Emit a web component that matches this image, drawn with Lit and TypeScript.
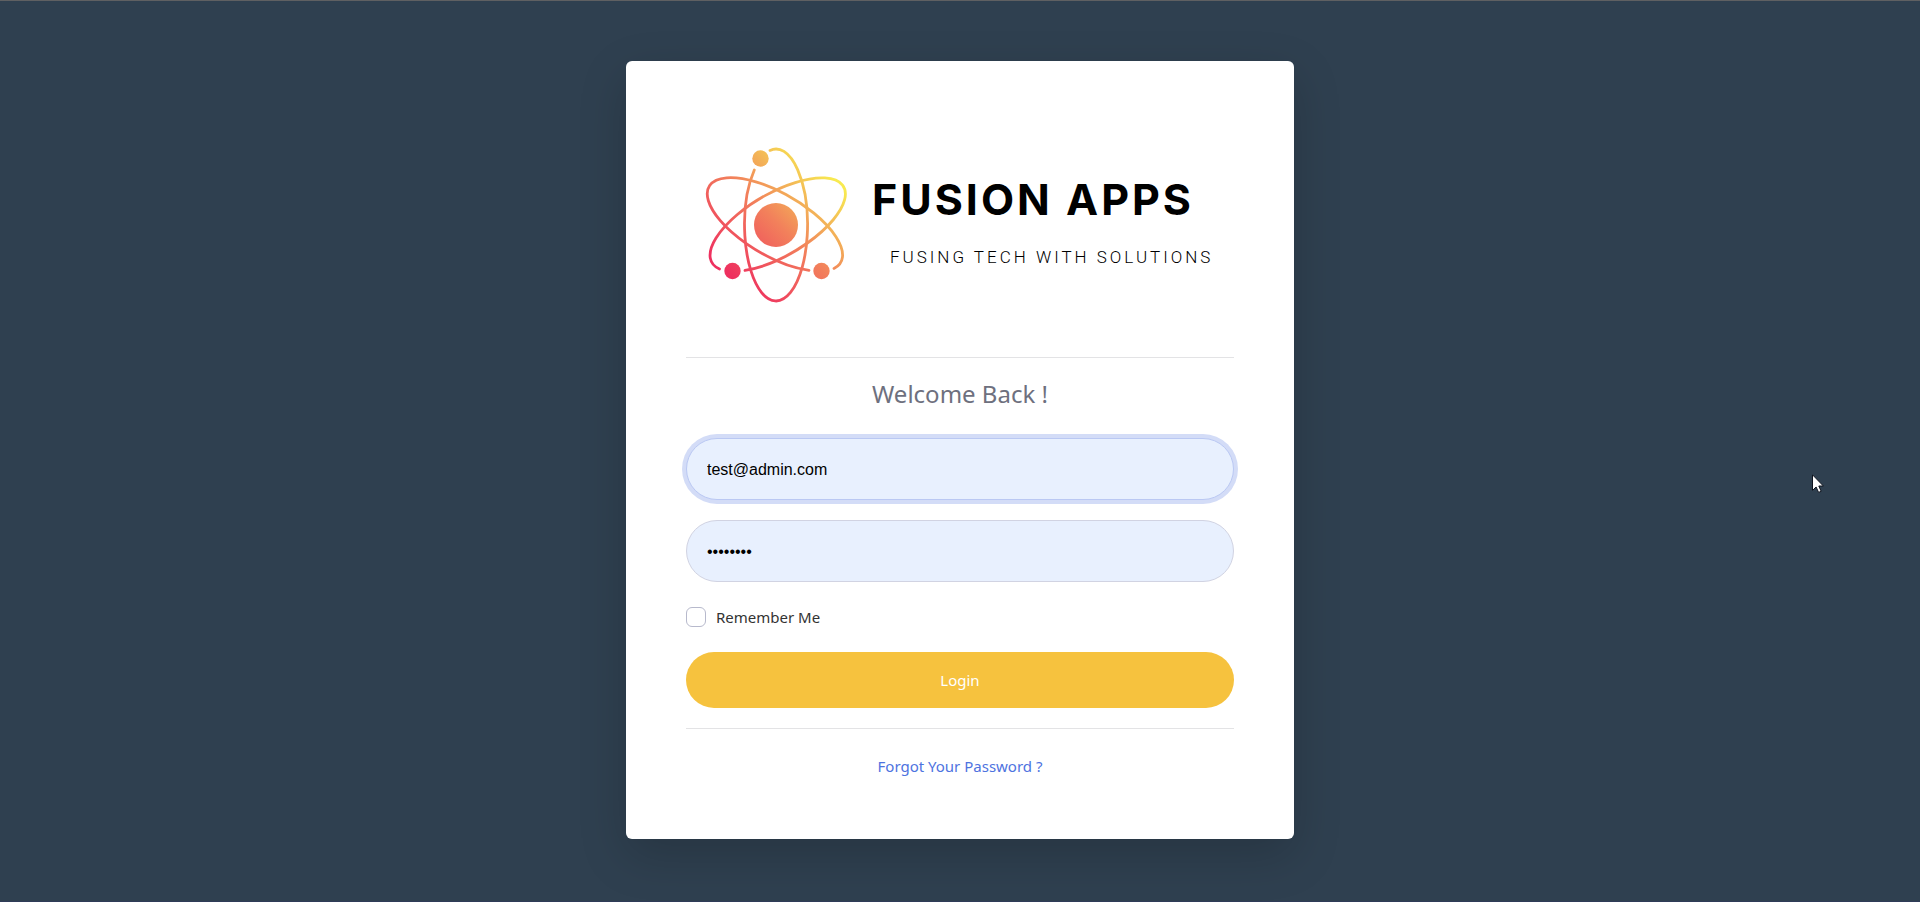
import { LitElement, html, css } from "lit";
import { customElement } from "lit/decorators.js";

@customElement("fusion-logo")
class FusionLogo extends LitElement {
  static styles = css`
    :host {
      display: flex;
      align-items: center;
      gap: 24px;
      padding: 12px 12px 25px 18px;
      color: #000;
    }
    .atom {
      flex: none;
      width: 144px;
      height: 160px;
    }
    .words {
      display: flex;
      flex-direction: column;
      gap: 22px;
      white-space: nowrap;
      padding-bottom: 6px;
    }
    .name {
      font: 700 43px/48px Inter, sans-serif;
      letter-spacing: 3px;
    }
    .tagline {
      font: 300 17px/24px Roboto, sans-serif;
      letter-spacing: 3px;
      padding-left: 18px;
    }
  `;

  render() {
    return html`
      <svg class="atom" viewBox="-72 -80 144 160" aria-hidden="true">
        <defs>
          <linearGradient id="glow" gradientUnits="userSpaceOnUse" x1="-48" y1="48" x2="52" y2="-52">
            <stop offset="0" stop-color="#ee305f" />
            <stop offset="0.5" stop-color="#f2815b" />
            <stop offset="0.75" stop-color="#f3b657" />
            <stop offset="1" stop-color="#f8ea50" />
          </linearGradient>
        </defs>
        <g fill="none" stroke="url(#glow)" stroke-width="2.8" stroke-linecap="round">
          <path d="M-6 -74.6A31.5 76 0 1 1 -21.7 -55" />
          <path d="M58 43.4A31.5 76 120 1 0 33 45.4" />
          <path d="M-56.5 44A31.5 76 -120 1 1 -31 45.4" />
        </g>
        <g fill="url(#glow)">
          <circle r="22" />
          <circle cx="-15.5" cy="-66.5" r="8.2" />
          <circle cx="-43.5" cy="46" r="8.2" />
          <circle cx="45.5" cy="46" r="8.2" />
        </g>
      </svg>
      <div class="words">
        <div class="name">FUSION APPS</div>
        <div class="tagline">FUSING TECH WITH SOLUTIONS</div>
      </div>
    `;
  }
}

@customElement("app-root")
class AppRoot extends LitElement {
  static styles = css`
    :host {
      display: block;
      font: 15px/30px "Noto Sans", sans-serif;
      color: #333;
    }
    * {
      box-sizing: border-box;
    }
    .page {
      position: relative;
      min-height: 100vh;
      padding: 60px 16px;
      border-top: 1px solid #5f6062;
      border-bottom: 1px solid #2f3c58;
      background: #2f4050;
    }
    .card {
      max-width: 668px;
      margin: 0 auto;
      padding: 60px 60px 56px;
      border-radius: 6px;
      background: #fff;
      box-shadow: 0 16px 48px rgba(0, 0, 0, 0.175);
    }
    .logo {
      min-height: 220px;
    }
    .rule {
      height: 1px;
      margin: 16px 0;
      border: 0;
      background: #e3e3e5;
    }
    .title {
      margin: 0 0 24px;
      font-size: 24px;
      font-weight: 400;
      line-height: 40px;
      text-align: center;
      color: #6e707e;
    }
    .form {
      display: flex;
      flex-direction: column;
      gap: 20px;
    }
    .field {
      display: block;
      width: 100%;
      height: 62px;
      padding: 2px 20px 0;
      border: 1px solid #d1d3e2;
      border-radius: 32px;
      outline: none;
      background: #e8f0fe;
      color: #000;
      font: 16px/24px "Liberation Sans", Arial, sans-serif;
    }
    .active {
      border-color: #bac8f3;
      box-shadow: 0 0 0 4px #d3dcf7;
    }
    .remember {
      display: flex;
      align-items: center;
      gap: 10px;
    }
    .tick {
      appearance: none;
      width: 20px;
      height: 20px;
      margin: 0;
      border: 1px solid #b7b9cc;
      border-radius: 6px;
      background: #fff;
    }
    .tick:checked {
      background: #4e73df;
    }
    .login {
      height: 56px;
      border: 0;
      border-radius: 32px;
      background: #f6c23e;
      color: #fff;
      font: inherit;
      cursor: pointer;
    }
    .lower {
      margin: 20px 0;
    }
    .help {
      line-height: 34px;
      text-align: center;
    }
    .link {
      color: #4e73df;
      text-decoration: none;
    }
    .pointer {
      position: absolute;
      left: 1812px;
      top: 473px;
      width: 12px;
      height: 19px;
    }
  `;

  render() {
    return html`
      <main class="page">
        <section class="card">
          <fusion-logo class="logo"></fusion-logo>
          <hr class="rule" />
          <h1 class="title">Welcome Back !</h1>
          <form class="form" @submit=${(e: Event) => e.preventDefault()}>
            <input class="field active" type="email" aria-label="Email address" .value=${"test@admin.com"} />
            <input class="field" type="password" aria-label="Password" .value=${"password"} />
            <div class="remember">
              <input class="tick" id="remember" type="checkbox" />
              <label for="remember">Remember Me</label>
            </div>
            <button class="login" type="submit">Login</button>
          </form>
          <hr class="rule lower" />
          <div class="help"><a class="link" href="#forgot">Forgot Your Password ?</a></div>
        </section>
        <svg class="pointer" viewBox="0 0 12 19" aria-hidden="true">
          <path d="M.5 .8V16.4L4.1 13L6.6 18.4L9.2 17.3L6.8 12H11.4Z" fill="#fff" stroke="#10151f" />
        </svg>
      </main>
    `;
  }
}
